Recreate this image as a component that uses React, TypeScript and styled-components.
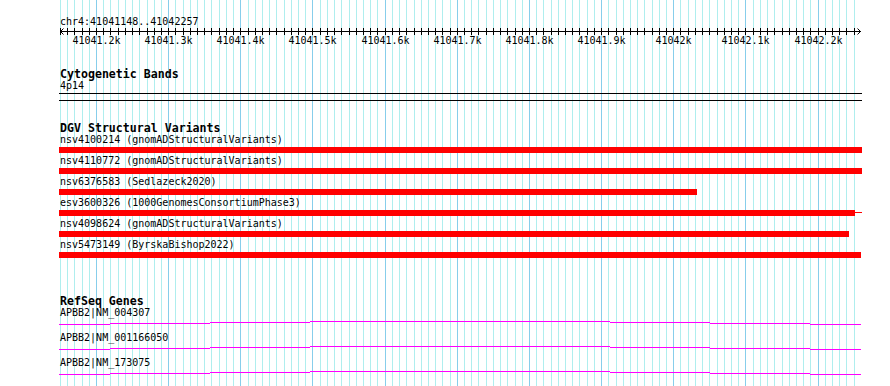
import * as React from 'react';
import styled, { createGlobalStyle } from 'styled-components';

// view: chr4:41041148..41042257, px = 96 + (bp - 41041200) * scale
const SCALE = 0.7216;
const toX = (bp: number) => Math.round(96 + (bp - 41041200) * SCALE);

const GRID_BPS: number[] = [];
for (let bp = 41041150; bp <= 41042250; bp += 10) GRID_BPS.push(bp);

const MAJOR_LABELS: [number, string][] = [
    [41041200, '41041.2k'],
    [41041300, '41041.3k'],
    [41041400, '41041.4k'],
    [41041500, '41041.5k'],
    [41041600, '41041.6k'],
    [41041700, '41041.7k'],
    [41041800, '41041.8k'],
    [41041900, '41041.9k'],
    [41042000, '41042k'],
    [41042100, '41042.1k'],
    [41042200, '41042.2k'],
];

interface Variant {
    id: string;
    source: string;
    end: number;
    tail?: number;
}

const VARIANTS: Variant[] = [
    { id: 'nsv4100214', source: 'gnomADStructuralVariants', end: 862 },
    { id: 'nsv4110772', source: 'gnomADStructuralVariants', end: 862 },
    { id: 'nsv6376583', source: 'Sedlazeck2020', end: 697 },
    { id: 'esv3600326', source: '1000GenomesConsortiumPhase3', end: 855, tail: 862 },
    { id: 'nsv4098624', source: 'gnomADStructuralVariants', end: 849 },
    { id: 'nsv5473149', source: 'ByrskaBishop2022', end: 861 },
];

const GENES = ['APBB2|NM_004307', 'APBB2|NM_001166050', 'APBB2|NM_173075'];

// exon-ish steps of the transcript line: [x1, x2, y]
const GENE_STEPS: [number, number, number][] = [
    [59, 110, 5],
    [110, 210, 4],
    [210, 310, 3],
    [310, 610, 2],
    [610, 710, 3],
    [710, 810, 4],
    [810, 861, 5],
];

const VIEW_LEFT = 59;

const GlobalStyle = createGlobalStyle`
body {
    margin: 0;
    background: #ffffff;
}
`

export default function App() {
    return <Page>
        <GlobalStyle />
        <GridLayer width={890} height={386}>
            {GRID_BPS.map(bp => {
                const x = toX(bp) + 0.5;
                return <line key={bp} x1={x} x2={x} y1={0} y2={386}
                    stroke={bp % 100 === 0 ? '#87ceeb' : '#afeeee'} strokeWidth={1} />
            })}
        </GridLayer>
        <Tracks>
            <Ruler>
                <Location>chr4:41041148..41042257</Location>
                <AxisSvg width={890} height={18}>
                    <line x1={60} x2={861} y1={3.5} y2={3.5} stroke="#000" />
                    {GRID_BPS.map(bp => {
                        const x = toX(bp) + 0.5;
                        return <line key={bp} x1={x} x2={x} y1={0} y2={7} stroke="#000" />
                    })}
                    <path d="M63.5 0.5 L60.5 3.5 L63.5 6.5" fill="none" stroke="#000" />
                    <path d="M857.5 0.5 L860.5 3.5 L857.5 6.5" fill="none" stroke="#000" />
                    {MAJOR_LABELS.map(([bp, label]) =>
                        <text key={bp} x={toX(bp) + 0.5} y={16} textAnchor="middle"
                            fontFamily="'DejaVu Sans Mono', monospace" fontSize={10} fill="#000">{label}</text>
                    )}
                </AxisSvg>
            </Ruler>

            <Track $gap={22}>
                <TrackTitle>Cytogenetic Bands</TrackTitle>
                <FeatureLabel>4p14</FeatureLabel>
                <BandBox />
            </Track>

            <Track $gap={21}>
                <TrackTitle>DGV Structural Variants</TrackTitle>
                {VARIANTS.map(v =>
                    <FeatureRow key={v.id}>
                        <FeatureLabel>{v.id} ({v.source})</FeatureLabel>
                        <BarLane>
                            <Bar style={{ width: v.end - VIEW_LEFT }} />
                            {v.tail && <BarTail style={{ width: v.tail - v.end }} />}
                        </BarLane>
                    </FeatureRow>
                )}
            </Track>

            <Track $gap={35}>
                <TrackTitle>RefSeq Genes</TrackTitle>
                {GENES.map(g =>
                    <GeneRow key={g}>
                        <FeatureLabel>{g}</FeatureLabel>
                        <GeneSvg width={890} height={13}>
                            {GENE_STEPS.map(([x1, x2, y]) =>
                                <line key={x1} x1={x1} x2={x2} y1={y + 0.5} y2={y + 0.5} stroke="#ff00ff" strokeWidth={1} />
                            )}
                        </GeneSvg>
                    </GeneRow>
                )}
            </Track>
        </Tracks>
    </Page>
}

const Page = styled.div`
position: relative;
width: 890px;
height: 386px;
overflow: hidden;
background: #ffffff;
color: #000000;
font-family: "DejaVu Sans Mono", "Liberation Mono", monospace;
`

const GridLayer = styled.svg`
position: absolute;
top: 0;
left: 0;
z-index: 0;
`

const Tracks = styled.div`
position: relative;
z-index: 1;
display: flex;
flex-direction: column;
`

const Ruler = styled.div`
display: flex;
flex-direction: column;
padding-top: 16px;
`

const Location = styled.div`
padding-left: 60px;
font-size: 10px;
line-height: 12px;
`

const AxisSvg = styled.svg`
display: block;
`

const Track = styled.section<{ $gap: number }>`
display: flex;
flex-direction: column;
margin-top: ${p => p.$gap}px;
`

const TrackTitle = styled.h3`
margin: 0;
padding-left: 60px;
font-size: 11.6px;
line-height: 12px;
font-weight: bold;
`

const FeatureLabel = styled.div`
padding-left: 60px;
font-size: 10px;
line-height: 12px;
white-space: pre;
`

const BandBox = styled.div`
box-sizing: border-box;
margin: 1px 0 0 ${VIEW_LEFT}px;
width: 803px;
height: 8px;
border-top: 1px solid #000000;
border-bottom: 1px solid #000000;
`

const FeatureRow = styled.div`
display: flex;
flex-direction: column;
height: 21px;
`

const BarLane = styled.div`
display: flex;
align-items: flex-start;
margin: 1px 0 2px ${VIEW_LEFT}px;
height: 6px;
`

const Bar = styled.div`
height: 6px;
background: #ff0000;
`

const BarTail = styled.div`
height: 1px;
margin-top: 2px;
background: #ff0000;
`

const GeneRow = styled.div`
display: flex;
flex-direction: column;
height: 25px;
`

const GeneSvg = styled.svg`
display: block;
`
